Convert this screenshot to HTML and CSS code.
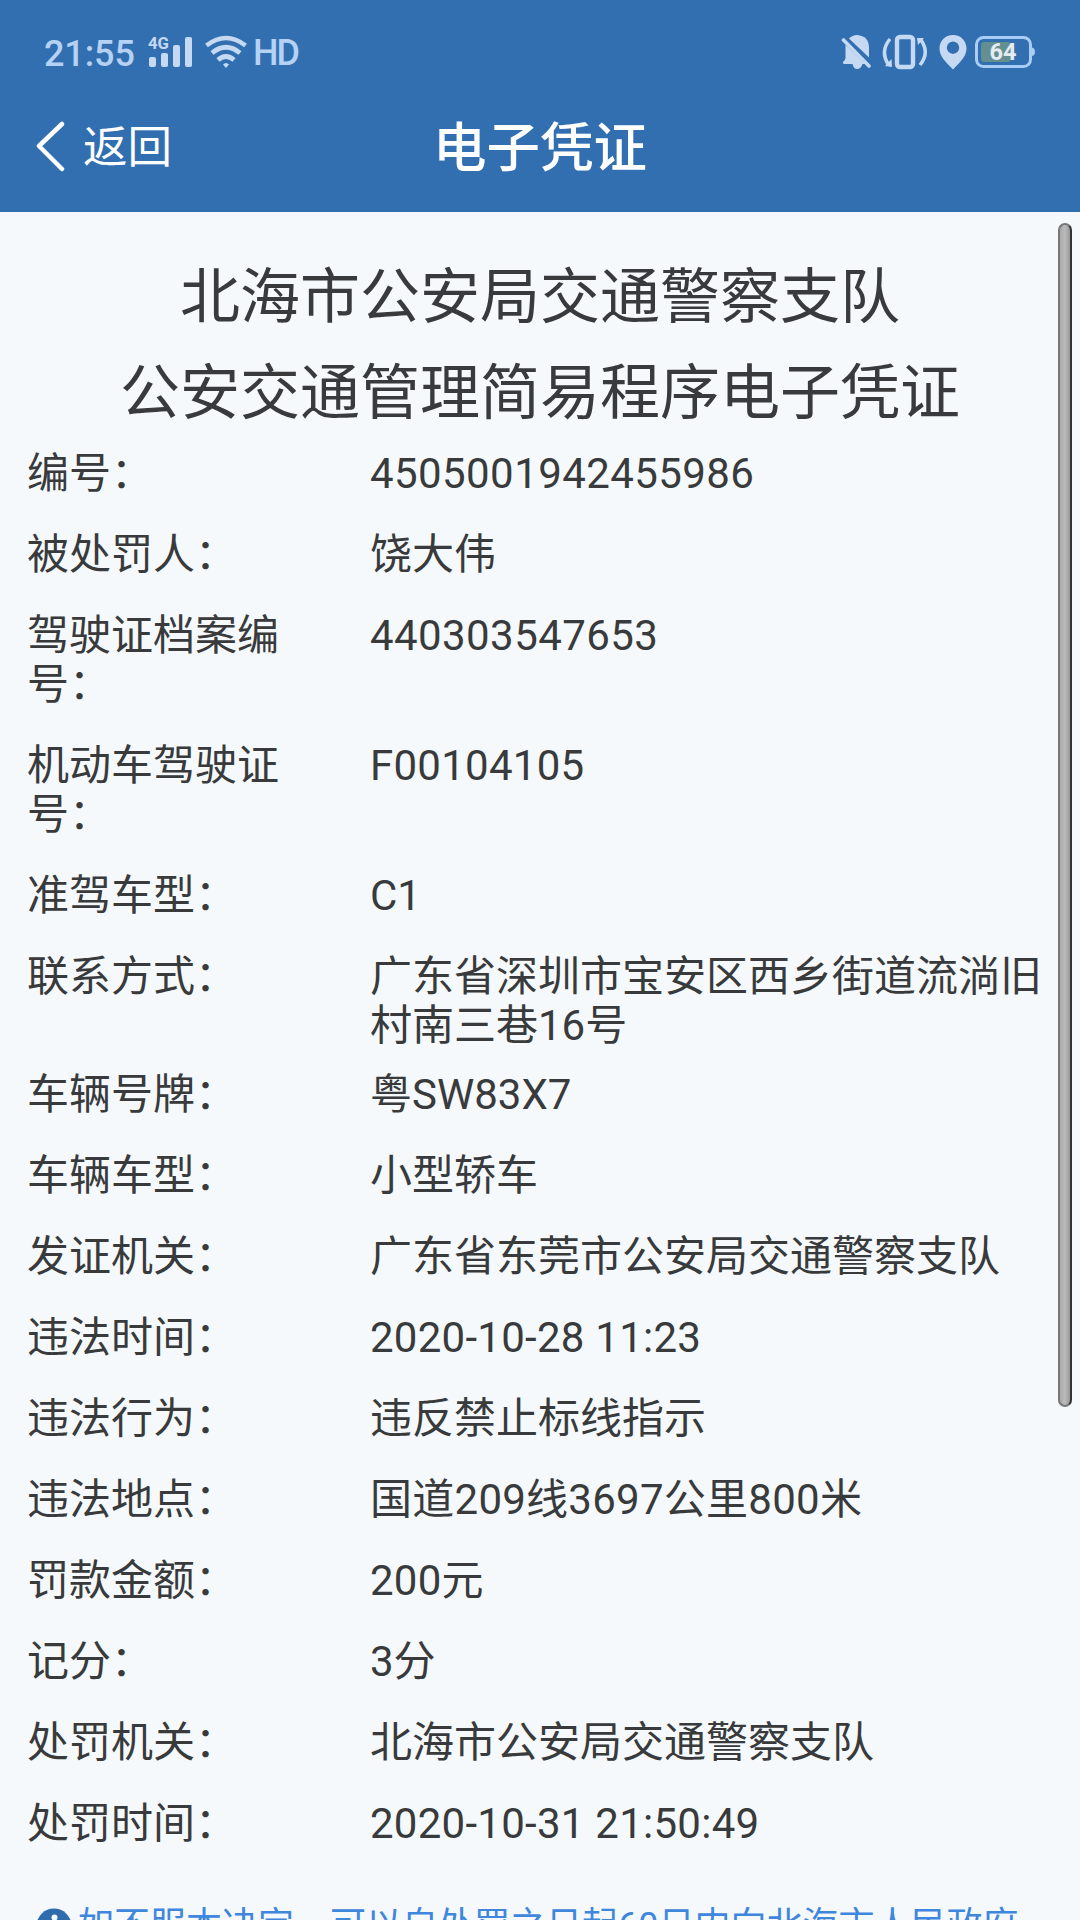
FILE: index.html
```
<!DOCTYPE html>
<html lang="zh-CN">
<head>
<meta charset="utf-8">
<title>电子凭证</title>
<link rel="stylesheet" href="styles.css">
</head>
<body>
<header class="header">
  <div class="status">
    <span class="clock">21:55</span>
    <svg class="signal" width="46" height="32" viewBox="0 0 46 32" fill="currentColor">
      <text x="0" y="13" font-size="16" font-weight="700" textLength="21" lengthAdjust="spacingAndGlyphs">4G</text>
      <rect x="1" y="21" width="7" height="10" rx="2"/><rect x="13" y="17" width="7" height="14" rx="2"/>
      <rect x="25" y="9" width="7" height="22" rx="2"/><rect x="37" y="1" width="7" height="30" rx="2"/>
    </svg>
    <svg class="wifi" width="44" height="34" viewBox="0 0 44 34" fill="none" stroke="currentColor" stroke-width="4.6">
      <path d="M2.5 10.5Q22 -4.500 41.500 10.500"/><path d="M8 18Q22 6.500 36 18"/><path d="M14 25Q22 18 30 25"/>
      <path d="M19 29.500Q22 26.500 25 29.500L22 33Z" fill="currentColor" stroke="none"/>
    </svg>
    <span class="hd">HD</span>
    <div class="status-right">
      <svg width="30" height="36" viewBox="0 0 30 36" fill="currentColor">
        <path d="M8 4.500Q11.500 1 16 1Q28 2 28 14V23.500Z"/>
        <path d="M4.500 10.500L24 30H21.500Q20 35 16 35Q12.500 35 11.500 30H4Q1.500 30 2 28Q4.500 26.500 4.500 24Z"/>
        <path d="M2.500 6L28 32" fill="none" stroke="currentColor" stroke-width="3.600" stroke-linecap="round"/>
      </svg>
      <svg width="46" height="36" viewBox="0 0 46 36" fill="none" stroke="currentColor">
        <rect x="15" y="3" width="16" height="30" rx="3" stroke-width="4.400"/>
        <path d="M8 5Q-2 17 6 30M38 31Q48 19 39 6" stroke-width="3.500"/>
        <path d="M3 32L9.500 25L10 33ZM35 4L42 4L36 11Z" fill="currentColor" stroke="none"/>
      </svg>
      <svg width="28" height="36" viewBox="0 0 28 36" fill="currentColor">
        <path fill-rule="evenodd" d="M14 1C6 1 .5 7 .5 14.500C.5 23 8 29 14 35.500C20 29 27.500 23 27.500 14.500C27.500 7 22 1 14 1ZM14 7.500A6.200 6.200 0 1 1 14 19.900A6.200 6.200 0 1 1 14 7.500Z"/>
      </svg>
      <svg class="battery" width="60" height="34" viewBox="0 0 60 34">
        <rect x="1.500" y="2.500" width="54" height="29" rx="7" fill="none" stroke="#a9cdf5" stroke-width="3"/>
        <path d="M57 12.500Q60 13 60 17Q60 20.500 57 21Z" fill="#a9cdf5"/>
        <rect x="6" y="7" width="30" height="20" rx="3" fill="#638f91"/>
        <text x="28" y="25" font-size="23" font-weight="700" text-anchor="middle" fill="#e4ecf2" textLength="27" lengthAdjust="spacingAndGlyphs">64</text>
      </svg>
    </div>
  </div>
  <nav class="nav">
    <div class="back">
      <svg width="32" height="52" viewBox="0 0 32 52" fill="none" stroke="#fff" stroke-width="4.500" stroke-linecap="round" stroke-linejoin="round"><path d="M27 4L4 26L27 49"/></svg>
      <span class="back-label">返回</span>
    </div>
    <h1 class="nav-title">电子凭证</h1>
  </nav>
</header>
<main class="content">
  <h2 class="heading">北海市公安局交通警察支队<br>公安交通管理简易程序电子凭证</h2>
  <dl class="rows">
    <dt>编号：</dt><dd class="number">4505001942455986</dd>
    <dt>被处罚人：</dt><dd>饶大伟</dd>
    <dt>驾驶证档案编号：</dt><dd class="number">440303547653</dd>
    <dt>机动车驾驶证号：</dt><dd class="code">F00104105</dd>
    <dt>准驾车型：</dt><dd>C1</dd>
    <dt>联系方式：</dt><dd>广东省深圳市宝安区西乡街道流淌旧村南三巷16号</dd>
    <dt>车辆号牌：</dt><dd>粤SW83X7</dd>
    <dt>车辆车型：</dt><dd>小型轿车</dd>
    <dt>发证机关：</dt><dd>广东省东莞市公安局交通警察支队</dd>
    <dt>违法时间：</dt><dd class="code">2020-10-28 11:23</dd>
    <dt>违法行为：</dt><dd>违反禁止标线指示</dd>
    <dt>违法地点：</dt><dd class="code">国道209线3697公里800米</dd>
    <dt>罚款金额：</dt><dd class="code">200元</dd>
    <dt>记分：</dt><dd>3分</dd>
    <dt>处罚机关：</dt><dd>北海市公安局交通警察支队</dd>
    <dt>处罚时间：</dt><dd class="code">2020-10-31 21:50:49</dd>
  </dl>
  <div class="notice">
    <svg width="36" height="36" viewBox="0 0 36 36"><circle cx="18" cy="18" r="17.500" fill="#2f6cad"/><circle cx="18.500" cy="9.500" r="3" fill="#f5f9fc"/><path d="M14 15H20V27H23" fill="none" stroke="#f5f9fc" stroke-width="4"/></svg>
    <span>如不服本决定，可以自处罚之日起60日内向北海市人民政府</span>
  </div>
  <div class="scrollbar"></div>
</main>
</body>
</html>
```
FILE: styles.css
```
* { box-sizing: border-box; }
body {
  margin: 0;
  width: 1080px;
  height: 1920px;
  overflow: hidden;
  background: #f5f9fc;
  color: #383a3b;
  font-family: Roboto, "Noto Sans CJK SC", sans-serif;
}
h1, h2, dl, dd { margin: 0; }
svg { display: block; flex: none; }

.header { height: 212px; background: #326fb0; color: #fff; }
.status {
  display: flex;
  align-items: center;
  height: 104px;
  padding: 0 45px 0 44px;
  color: #c6d9f3;
}
.clock { width: 104px; font-size: 36px; font-weight: 500; color: #b5d1f3; padding-top: 3px; letter-spacing: -.1px; }
.signal { margin-right: 10px; overflow: visible; }
.wifi { margin-right: 5px; }
.hd { font-size: 36px; font-weight: 500; color: #b5d1f3; letter-spacing: -2px; padding-top: 1px; }
.status-right { display: flex; align-items: center; margin-left: auto; gap: 11px; }
.battery { margin-left: -3px; }

.nav {
  display: grid;
  grid-template-columns: 1fr auto 1fr;
  align-items: center;
  height: 84px;
}
.back { display: flex; align-items: center; gap: 16px; padding-left: 35px; font-size: 44.500px; line-height: 60px; }
.back-label { padding-top: 3px; }
.nav-title { font-size: 53.500px; font-weight: 500; line-height: 72px; padding-top: 5px; }

.content { position: relative; height: 1708px; padding: 38px 27px 0; overflow: hidden; }
.heading { font-size: 60px; font-weight: 400; line-height: 96px; text-align: center; margin: 0 -27px; white-space: nowrap; }
.rows {
  display: grid;
  grid-template-columns: 343px 1fr;
  margin-top: 7px;
  font-size: 42px;
  line-height: 49px;
}
dt { width: 256px; padding-bottom: 32px; }
dd { padding-bottom: 19.500px; margin-right: -9px; }
.number { letter-spacing: .42px; }
.code { letter-spacing: .26px; }
.notice {
  display: flex;
  align-items: center;
  gap: 6px;
  margin: 22px 0 0 9px;
  font-size: 36px;
  line-height: 48px;
  color: #3f86dd;
  white-space: nowrap;
}
.scrollbar {
  position: absolute;
  top: 11px;
  left: 1058px;
  width: 14px;
  height: 1184px;
  border-radius: 7px;
  border: 2px solid #777;
  border-right-color: #333;
  background: linear-gradient(90deg, #aaa, #bbb 50%, #999);
}
```
